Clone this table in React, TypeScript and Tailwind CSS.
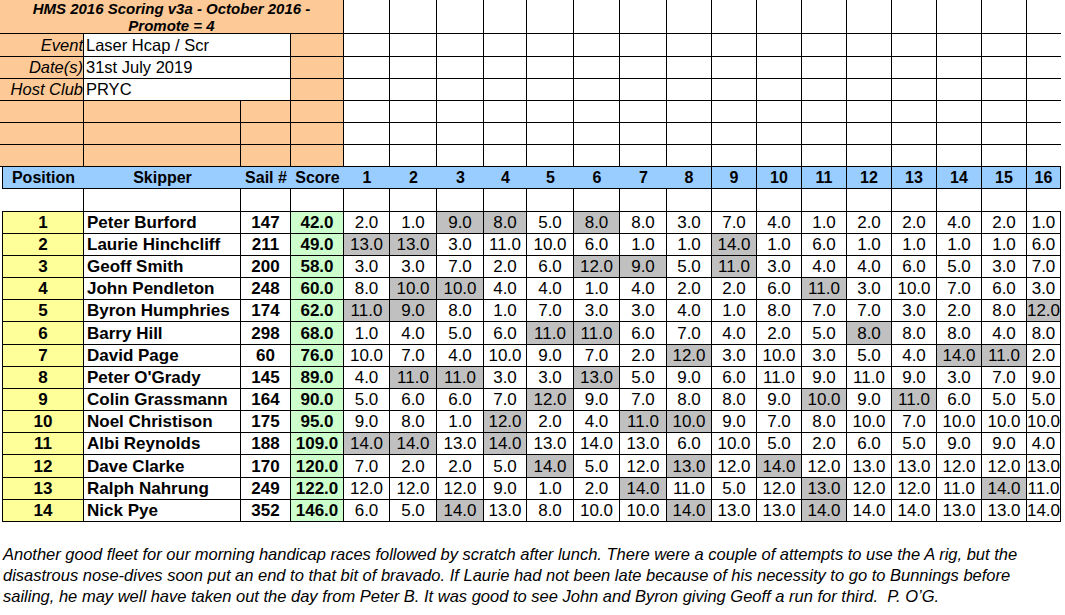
import React from 'react'

const ORANGE = 'bg-[#fcc997]'

// race column widths (px), written out so tailwind picks them up
const raceW = [
  'w-[46px]', 'w-[47px]', 'w-[47px]', 'w-[43px]', 'w-[47px]', 'w-[46px]', 'w-[47px]', 'w-[45px]',
  'w-[45px]', 'w-[45px]', 'w-[45px]', 'w-[45px]', 'w-[45px]', 'w-[45px]', 'w-[45px]', 'w-[34px]',
]

const topRowH = ['h-[34px]', 'h-[23px]', 'h-[22px]', 'h-[22px]', 'h-[22px]', 'h-[22px]', 'h-[22px]']

type Result = {
  pos: number
  name: string
  sail: number
  score: string
  races: number[]
  drop: number[] // race indexes (0 based) that are discarded
}

const results: Result[] = [
  { pos: 1, name: 'Peter Burford', sail: 147, score: '42.0', races: [2, 1, 9, 8, 5, 8, 8, 3, 7, 4, 1, 2, 2, 4, 2, 1], drop: [2, 3, 5] },
  { pos: 2, name: 'Laurie Hinchcliff', sail: 211, score: '49.0', races: [13, 13, 3, 11, 10, 6, 1, 1, 14, 1, 6, 1, 1, 1, 1, 6], drop: [0, 1, 8] },
  { pos: 3, name: 'Geoff Smith', sail: 200, score: '58.0', races: [3, 3, 7, 2, 6, 12, 9, 5, 11, 3, 4, 4, 6, 5, 3, 7], drop: [5, 6, 8] },
  { pos: 4, name: 'John Pendleton', sail: 248, score: '60.0', races: [8, 10, 10, 4, 4, 1, 4, 2, 2, 6, 11, 3, 10, 7, 6, 3], drop: [1, 2, 10] },
  { pos: 5, name: 'Byron Humphries', sail: 174, score: '62.0', races: [11, 9, 8, 1, 7, 3, 3, 4, 1, 8, 7, 7, 3, 2, 8, 12], drop: [0, 1, 15] },
  { pos: 6, name: 'Barry Hill', sail: 298, score: '68.0', races: [1, 4, 5, 6, 11, 11, 6, 7, 4, 2, 5, 8, 8, 8, 4, 8], drop: [4, 5, 11] },
  { pos: 7, name: 'David Page', sail: 60, score: '76.0', races: [10, 7, 4, 10, 9, 7, 2, 12, 3, 10, 3, 5, 4, 14, 11, 2], drop: [7, 13, 14] },
  { pos: 8, name: "Peter O'Grady", sail: 145, score: '89.0', races: [4, 11, 11, 3, 3, 13, 5, 9, 6, 11, 9, 11, 9, 3, 7, 9], drop: [1, 2, 5] },
  { pos: 9, name: 'Colin Grassmann', sail: 164, score: '90.0', races: [5, 6, 6, 7, 12, 9, 7, 8, 8, 9, 10, 9, 11, 6, 5, 5], drop: [4, 10, 12] },
  { pos: 10, name: 'Noel Christison', sail: 175, score: '95.0', races: [9, 8, 1, 12, 2, 4, 11, 10, 9, 7, 8, 10, 7, 10, 10, 10], drop: [3, 6, 7] },
  { pos: 11, name: 'Albi Reynolds', sail: 188, score: '109.0', races: [14, 14, 13, 14, 13, 14, 13, 6, 10, 5, 2, 6, 5, 9, 9, 4], drop: [0, 1, 3] },
  { pos: 12, name: 'Dave Clarke', sail: 170, score: '120.0', races: [7, 2, 2, 5, 14, 5, 12, 13, 12, 14, 12, 13, 13, 12, 12, 13], drop: [4, 7, 9] },
  { pos: 13, name: 'Ralph Nahrung', sail: 249, score: '122.0', races: [12, 12, 12, 9, 1, 2, 14, 11, 5, 12, 13, 12, 12, 11, 14, 11], drop: [6, 10, 14] },
  { pos: 14, name: 'Nick Pye', sail: 352, score: '146.0', races: [6, 5, 14, 13, 8, 10, 10, 14, 13, 13, 14, 14, 14, 13, 13, 14], drop: [2, 7, 10] },
]

const info = [
  { label: 'Event', value: 'Laser Hcap / Scr' },
  { label: 'Date(s)', value: '31st July 2019' },
  { label: 'Host Club', value: 'PRYC' },
]

const TopLeft = () => (
  <div className="w-[344px] shrink-0">
    <div className={`h-[34px] ${ORANGE} border-b border-r border-black flex items-center justify-center text-center font-bold italic text-[15px] leading-[17px]`}>
      HMS 2016 Scoring v3a - October 2016 -<br />Promote = 4
    </div>
    {info.map((r, i) => (
      <div key={r.label} className={`flex ${i === 0 ? 'h-[23px]' : 'h-[22px]'} border-b border-black`}>
        <div className={`w-[84px] ${ORANGE} border-r border-black flex items-center justify-end italic text-[16.5px] leading-none whitespace-nowrap`}>
          {r.label}
        </div>
        <div className="w-[207px] bg-white border-r border-black flex items-center pl-[2px] text-[16.5px] leading-none">
          {r.value}
        </div>
        <div className={`w-[53px] ${ORANGE} border-r border-black`} />
      </div>
    ))}
    {[0, 1, 2].map((i) => (
      <div key={i} className="flex h-[22px] border-b border-black">
        <div className={`w-[84px] ${ORANGE} border-r border-black`} />
        <div className={`w-[157px] ${ORANGE} border-r border-black`} />
        <div className={`w-[50px] ${ORANGE} border-r border-black`} />
        <div className={`w-[53px] ${ORANGE} border-r border-black`} />
      </div>
    ))}
  </div>
)

const TopRight = () => (
  <div className="w-[717px] shrink-0">
    {topRowH.map((h, r) => (
      <div key={r} className={`flex ${h}`}>
        {raceW.map((w, c) => (
          <div key={c} className={`${w} h-full border-b border-black ${c < 15 ? 'border-r' : ''}`} />
        ))}
      </div>
    ))}
  </div>
)

const Header = () => (
  <div className="ml-[2px] flex h-[22px] border-l border-b border-black bg-[#99ccff] font-bold text-[16px] leading-none">
    <div className="w-[81px] flex items-center justify-center">Position</div>
    <div className="w-[157px] flex items-center justify-center">Skipper</div>
    <div className="w-[50px] flex items-center justify-center">Sail #</div>
    <div className="w-[53px] flex items-center justify-center">Score</div>
    {raceW.map((w, c) => (
      <div key={c} className={`${w} flex items-center justify-center border-black ${c >= 7 ? 'border-r' : ''}`}>
        {c + 1}
      </div>
    ))}
  </div>
)

const EmptyRow = () => (
  <div className="ml-[2px] flex h-[22px] border-l border-transparent">
    <div className="w-[81px] border-r border-black" />
    <div className="w-[157px] border-r border-black" />
    <div className="w-[50px] border-r border-black" />
    <div className="w-[53px] border-r border-black" />
    {raceW.map((w, c) => (
      <div key={c} className={`${w} border-black ${c < 15 ? 'border-r' : ''}`} />
    ))}
  </div>
)

const ResultRow = ({ r, tall }: { r: Result; tall: boolean }) => (
  <div className={`flex ${tall ? 'h-[23px]' : 'h-[22px]'} border-b border-black text-[17px] leading-none`}>
    <div className="w-[81px] bg-[#ffff99] border-r border-black flex items-center justify-center font-bold">{r.pos}</div>
    <div className="w-[157px] border-r border-black flex items-center pl-[3px] font-bold whitespace-nowrap">{r.name}</div>
    <div className="w-[50px] border-r border-black flex items-center justify-center font-bold">{r.sail}</div>
    <div className="w-[53px] bg-[#ccffcc] border-r border-black flex items-center justify-center font-bold">{r.score}</div>
    {r.races.map((v, c) => (
      <div
        key={c}
        className={`${raceW[c]} border-r border-black flex items-center justify-center ${r.drop.includes(c) ? 'bg-[#c0c0c0]' : ''}`}
      >
        {v.toFixed(1)}
      </div>
    ))}
  </div>
)

export default function App() {
  return (
    <div className="w-[1065px] h-[615px] bg-white text-black overflow-hidden font-['Liberation_Sans',Arial,sans-serif]">
      <div className="w-[1061px]">
        <div className="flex">
          <TopLeft />
          <TopRight />
        </div>
        <Header />
        <EmptyRow />
        <div className="ml-[2px] border-t border-l border-black">
          {results.map((r, i) => (
            <ResultRow key={r.pos} r={r} tall={i === 5 || i === 11} />
          ))}
        </div>
      </div>
      <p className="mt-[22px] pl-[3px] italic text-[16.5px] leading-[21px] whitespace-nowrap">
        Another good fleet for our morning handicap races followed by scratch after lunch. There were a couple of attempts to use the A rig, but the
        <br />
        disastrous nose-dives soon put an end to that bit of bravado. If Laurie had not been late because of his necessity to go to Bunnings before
        <br />
        sailing, he may well have taken out the day from Peter B. It was good to see John and Byron giving Geoff a run for third.&nbsp; P. O’G.
      </p>
    </div>
  )
}
